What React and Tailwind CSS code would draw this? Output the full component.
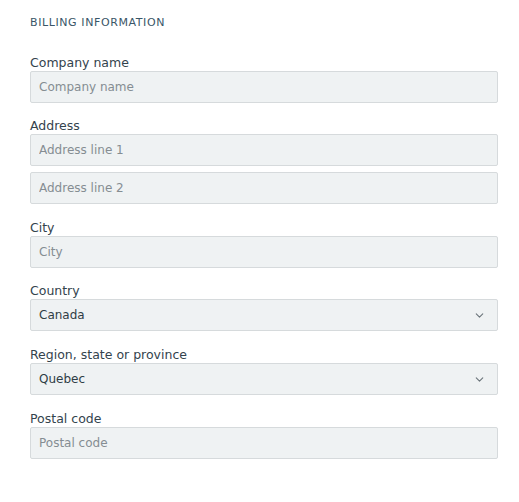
import { ChevronDown } from 'lucide-react';

const FONT = { fontFamily: '"DejaVu Sans", "Open Sans", sans-serif' };

function Label({ children }) {
  return <div className="text-[12.5px] leading-[17px] text-[#33434d]">{children}</div>;
}

function Input({ placeholder }) {
  return (
    <input
      type="text"
      placeholder={placeholder}
      className="w-full h-[32px] bg-[#eff2f3] border border-[#d6dadc] rounded-[2px] px-2 text-[12px] text-[#2f3d45] placeholder-[#858d92] outline-none"
    />
  );
}

function Select({ value }) {
  return (
    <div className="relative w-full h-[32px] bg-[#eff2f3] border border-[#d6dadc] rounded-[2px] px-2 flex items-center text-[12px] text-[#2f3d45]">
      <span>{value}</span>
      <ChevronDown size={13} strokeWidth={2} className="absolute right-[11px] top-[9px] text-[#6b757b]" />
    </div>
  );
}

export default function App() {
  return (
    <div className="w-[519px] h-[502px] bg-white pl-[30px] pr-[21px] pt-[15px]" style={FONT}>
      <div className="text-[11px] leading-[16px] tracking-[0.6px] text-[#3a5668] mb-[23px]">BILLING INFORMATION</div>

      <div className="mb-[14px]">
        <Label>Company name</Label>
        <Input placeholder="Company name" />
      </div>

      <div className="mb-[15px]">
        <Label>Address</Label>
        <div className="flex flex-col gap-[6px]">
          <Input placeholder="Address line 1" />
          <Input placeholder="Address line 2" />
        </div>
      </div>

      <div className="mb-[14px]">
        <Label>City</Label>
        <Input placeholder="City" />
      </div>

      <div className="mb-[15px]">
        <Label>Country</Label>
        <Select value="Canada" />
      </div>

      <div className="mb-[15px]">
        <Label>Region, state or province</Label>
        <Select value="Quebec" />
      </div>

      <div>
        <Label>Postal code</Label>
        <Input placeholder="Postal code" />
      </div>
    </div>
  );
}
